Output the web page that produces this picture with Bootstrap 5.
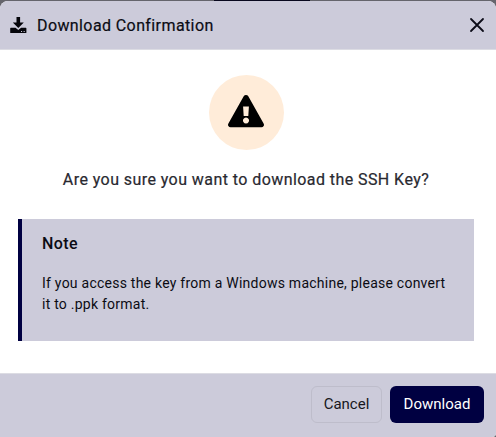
<!DOCTYPE html>
<html lang="en">
<head>
<meta charset="utf-8">
<meta name="viewport" content="width=device-width, initial-scale=1">
<title>Download Confirmation</title>
<link href="https://cdn.jsdelivr.net/npm/bootstrap@5.3.0/dist/css/bootstrap.min.css" rel="stylesheet">
<style>
body{background:#65656c;font-family:Roboto,"Noto Sans",sans-serif;font-size:15.5px;color:#0b0b14;height:437px;overflow:hidden}
.page-sliver{height:1px;padding-left:214px}
.page-sliver span{width:96px;height:3px;background:#08081e}
.dialog-box{height:436px;border:0;border-radius:8px 8px 4px 0;overflow:hidden;background:#fff}
.dialog-head{height:49px;padding:0 11px 0 10px;background:#cccbda;border-bottom:1px solid #dcdce3;border-radius:0}
.head-title{font-size:16px;font-weight:400;letter-spacing:.4px;line-height:24px;margin:2px 0 0 10px;-webkit-text-stroke:.2px #0b0b14}
.close-x{width:16px;height:16px}
.dialog-main{padding:25px 22px 0 18px}
.warn-circle{width:75px;height:75px;background:#ffecd9;padding-bottom:3px}
.question{font-size:16px;font-weight:400;letter-spacing:.43px;line-height:24px;margin:18px 0 27px;color:#292930;white-space:nowrap;-webkit-text-stroke:.2px #292930}
.note-panel{height:122px;background:#cccbda;border-left:4px solid #000041;padding:13px 20px 0}
.note-title{font-size:16px;font-weight:500;letter-spacing:.4px;line-height:24px;margin-bottom:17px}
.note-copy{font-size:14px;line-height:21px;letter-spacing:.24px;white-space:nowrap}
.dialog-foot{height:64px;padding:0 12px 2px;background:#cccbda;border-top:1px solid #dcdce3;border-radius:0}
.dialog-foot .btn{height:37px;padding:0;font-size:15px;border-radius:6px;line-height:35px;margin:0}
.btn-cancel{width:71px;border-color:#bebdcb;color:#171720}
.btn-download{width:94px;background:#000041;color:#fff}
</style>
</head>
<body>
<div class="page-sliver d-flex"><span></span></div>
<div class="modal-content dialog-box" role="dialog" aria-labelledby="heading">
  <div class="modal-header dialog-head">
    <div class="d-flex align-items-center">
      <svg width="17" height="17" viewBox="0 0 17 17" aria-hidden="true"><path fill="#05050a" fill-rule="evenodd" d="M6.5 0h3.6v5.5h3.7L8.3 11 2.8 5.5h3.7zM.8 10.8h4.7l2.8 2.1 2.8-2.1h4.7a.6.6 0 0 1 .6.6v4a.6.6 0 0 1-.6.6H.8a.6.6 0 0 1-.6-.6v-4a.6.6 0 0 1 .6-.6zM11 14h1.1v1H11zm2.6 0h1.1v1h-1.1z"/></svg>
      <div class="head-title" id="heading">Download Confirmation</div>
    </div>
    <svg class="close-x" viewBox="0 0 16 16" role="button" aria-label="Close"><path d="M2 2 14 14M14 2 2 14" fill="none" stroke="#0c0c18" stroke-width="1.8" stroke-linecap="round"/></svg>
  </div>
  <div class="modal-body dialog-main">
    <div class="d-flex justify-content-center">
      <div class="warn-circle rounded-circle d-flex align-items-center justify-content-center">
        <svg width="38" height="34" viewBox="0 0 38 34" aria-hidden="true"><path fill="#000" fill-rule="evenodd" d="M16.7 2.2a2.7 2.7 0 0 1 4.6 0l15.3 27.2a2.5 2.5 0 0 1-2.2 3.8H3.6a2.5 2.5 0 0 1-2.2-3.8zM16.1 12.5l.6 9.5h4.6l.6-9.5zM19 23.4a3 3 0 1 0 .01 0z"/></svg>
      </div>
    </div>
    <p class="question text-center">Are you sure you want to download the SSH Key?</p>
    <section class="note-panel">
      <div class="note-title">Note</div>
      <p class="note-copy mb-0">If you access the key from a Windows machine, please convert<br>it to .ppk format.</p>
    </section>
  </div>
  <div class="modal-footer dialog-foot d-flex align-items-center flex-nowrap gap-2">
    <button type="button" class="btn btn-cancel">Cancel</button>
    <button type="button" class="btn btn-download">Download</button>
  </div>
</div>
<script src="https://cdn.jsdelivr.net/npm/bootstrap@5.3.0/dist/js/bootstrap.bundle.min.js"></script>
</body>
</html>
